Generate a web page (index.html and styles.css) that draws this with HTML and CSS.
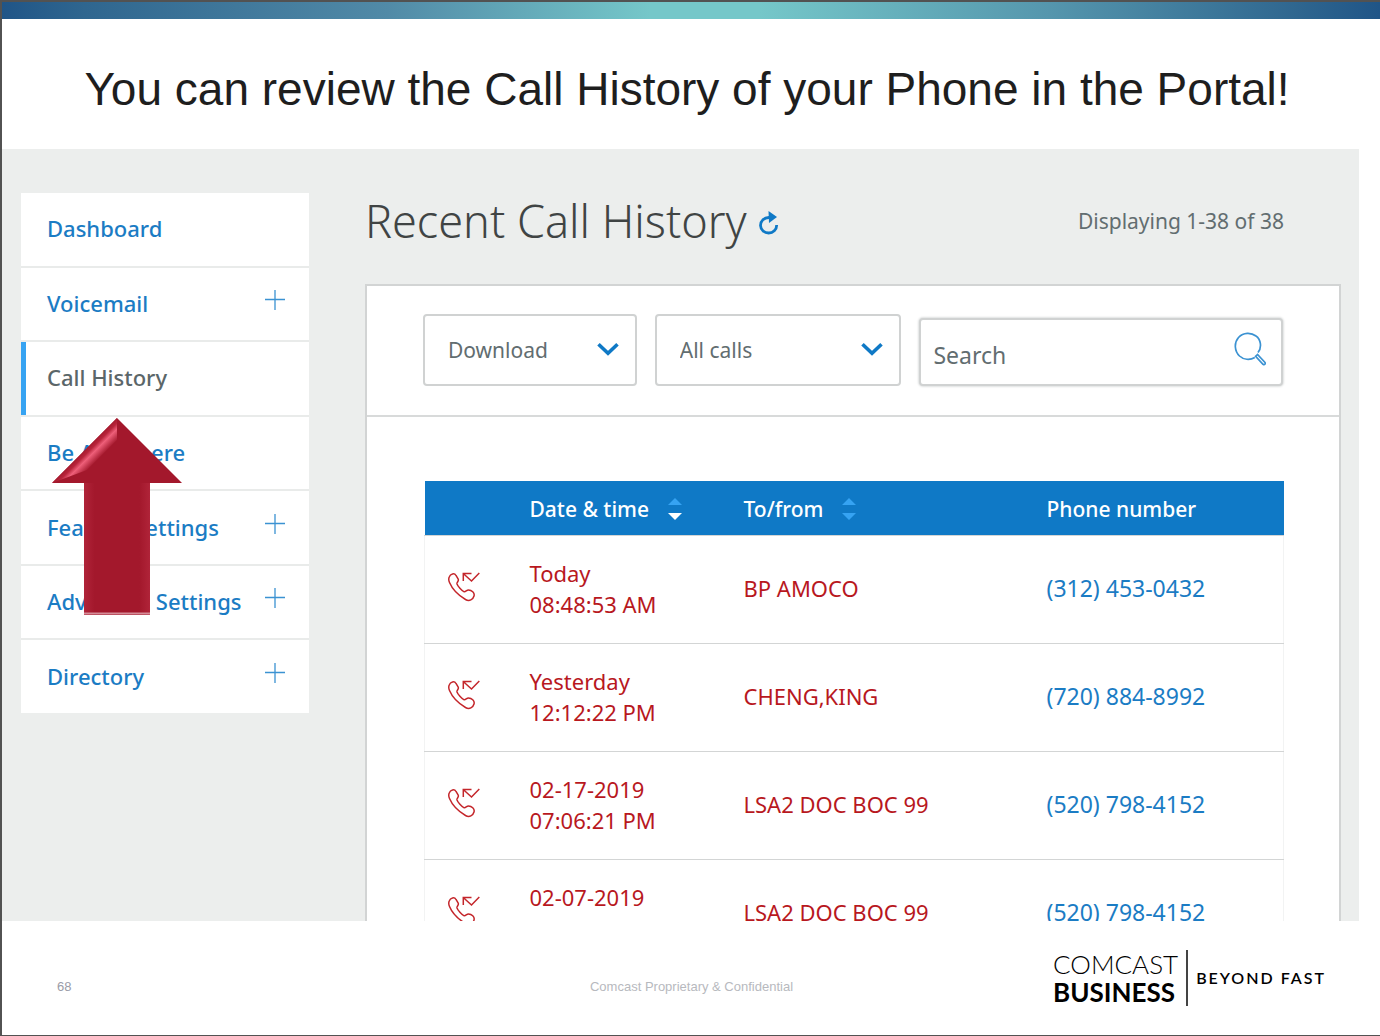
FILE: index.html
```html
<!DOCTYPE html>
<html lang="en">
<head>
<meta charset="utf-8">
<meta name="viewport" content="width=device-width, initial-scale=1">
<title>Call History</title>
<link rel="stylesheet" href="styles.css">
</head>
<body>
<svg class="defs" aria-hidden="true">
  <symbol id="plus" viewBox="0 0 20 20"><path d="M10 0v20M0 9.500h20" fill="none" stroke="#3b92d2" stroke-width="1.300"/></symbol>
  <symbol id="chevron" viewBox="0 0 22 14"><path d="M1.500 2.200L11 11.200L20.500 2.200" fill="none" stroke="#0f79c6" stroke-width="3.600"/></symbol>
  <symbol id="call" viewBox="0 0 32 30"><path d="M1.200 5C2.500 1.500 6.500 .8 8 3.500L10.200 7.200C11.200 9.200 8.500 10 9 12C10 14.500 13.500 18.500 15.800 19.600C17.500 20.400 18.500 18 20.500 18C23.500 18 27 20.800 26 24C25 27.500 21.500 29.800 17.500 27.500C10 23 4 16.500 1.500 10.500C.6 8.500 .6 6.500 1.200 5ZM15.300 9V1.500H23.500M15.500 1.800L23.500 9L31.300 1" fill="none" stroke="#c4262b" stroke-width="1.500"/></symbol>
</svg>
<div class="slide">
  <div class="ribbon"></div>
  <header class="title"><h1>You can review the Call History of your Phone in the Portal!</h1></header>
  <div class="portal">
    <nav class="menu" aria-label="Portal">
      <a class="item" href="#">Dashboard</a>
      <a class="item" href="#">Voicemail<svg class="plus"><use href="#plus"/></svg></a>
      <a class="item current" href="#" aria-current="page">Call History</a>
      <a class="item" href="#">Be Anywhere</a>
      <a class="item" href="#">Feature Settings<svg class="plus"><use href="#plus"/></svg></a>
      <a class="item" href="#">Advanced Settings<svg class="plus"><use href="#plus"/></svg></a>
      <a class="item" href="#">Directory<svg class="plus"><use href="#plus"/></svg></a>
      <svg class="arrow" viewBox="0 0 130 197" aria-hidden="true">
        <defs>
          <linearGradient id="bevel" gradientUnits="userSpaceOnUse" x1="32" y1="32" x2="44" y2="44">
            <stop offset="0" stop-color="#a3182c"/><stop offset=".25" stop-color="#b8253b"/><stop offset=".5" stop-color="#ee5f79"/><stop offset="1" stop-color="#a3182c"/>
          </linearGradient>
          <linearGradient id="shaft"><stop offset="0" stop-color="#b02439"/><stop offset=".16" stop-color="#a3182c"/><stop offset=".84" stop-color="#a3182c"/><stop offset="1" stop-color="#b02439"/></linearGradient>
        </defs>
        <path d="M65 0L130 65H98V197H32V65H0Z" fill="#a3182c"/>
        <path d="M32 65H98V197H32Z" fill="url(#shaft)"/>
        <path d="M65 0V22L35 52L0 65Z" fill="url(#bevel)"/>
        <path d="M32 195.500H98" stroke="#d58c97" stroke-width="2"/>
      </svg>
    </nav>
    <main class="content">
      <div class="heading">
        <h2>Recent Call History</h2>
        <button class="refresh" aria-label="Refresh"><svg viewBox="0 0 20 24"><path d="M10.500 6.500C5 6.200 1.500 10 1.500 14.500C1.700 19 5.500 22 9.700 22C14 22 17.700 18.700 17.700 14" fill="none" stroke="#0f79c6" stroke-width="2.800"/><path d="M9.500 0L18 6L10 12Z" fill="#0f79c6"/></svg></button>
        <p class="count">Displaying 1-38 of 38</p>
      </div>
      <section class="card">
        <form class="tools">
          <div class="pick download"><select aria-label="Download"><option>Download</option></select><svg class="chevron"><use href="#chevron"/></svg></div>
          <div class="pick calls"><select aria-label="Filter calls"><option>All calls</option></select><svg class="chevron"><use href="#chevron"/></svg></div>
          <div class="search"><input type="text" placeholder="Search" aria-label="Search"><svg class="lens" viewBox="0 0 32 34"><path d="M23.500 22.500L21.600 24.300L29 32.300C30.500 33.300 32 31.800 30.800 30.200Z M24 20.500C28 15.500 27 7.500 22 4C17 .2 9.500 .2 4.500 5.500C-.2 11 .5 19 5.500 24C9.500 27.800 16 28.300 20.800 25.500" fill="none" stroke="#3b92d2" stroke-width="1.700"/></svg></div>
        </form>
        <table class="log">
          <colgroup><col class="c-icon"><col class="c-date"><col class="c-name"><col></colgroup>
          <thead><tr>
            <th></th>
            <th scope="col"><button class="sort">Date &amp; time<svg viewBox="0 0 14 22"><path d="M0 7L7 0L14 7Z" fill="#36a3f2"/><path d="M0 15L7 22L14 15Z" fill="#fff"/></svg></button></th>
            <th scope="col"><button class="sort">To/from<svg viewBox="0 0 14 22"><path d="M0 7L7 0L14 7ZM0 15L7 22L14 15Z" fill="#36a3f2"/></svg></button></th>
            <th scope="col">Phone number</th>
          </tr></thead>
          <tbody>
            <tr><td><svg class="call"><use href="#call"/></svg></td><td>Today<br>08:48:53 AM</td><td>BP AMOCO</td><td class="phone"><a href="#">(312) 453-0432</a></td></tr>
            <tr><td><svg class="call"><use href="#call"/></svg></td><td>Yesterday<br>12:12:22 PM</td><td>CHENG,KING</td><td class="phone"><a href="#">(720) 884-8992</a></td></tr>
            <tr><td><svg class="call"><use href="#call"/></svg></td><td>02-17-2019<br>07:06:21 PM</td><td>LSA2 DOC BOC 99</td><td class="phone"><a href="#">(520) 798-4152</a></td></tr>
            <tr><td><svg class="call"><use href="#call"/></svg></td><td>02-07-2019<br>&nbsp;</td><td>LSA2 DOC BOC 99</td><td class="phone"><a href="#">(520) 798-4152</a></td></tr>
          </tbody>
        </table>
      </section>
    </main>
  </div>
  <footer class="foot">
    <span class="page">68</span>
    <span class="notice">Comcast Proprietary &amp; Confidential</span>
    <div class="brand"><p class="name"><span>COMCAST</span><b>BUSINESS</b></p><p class="tag">BEYOND FAST</p></div>
  </footer>
</div>
</body>
</html>
```
FILE: styles.css
```css
* { box-sizing: border-box; }
body, h1, h2, p { margin: 0; }
body { background: #fff; font-family: "Noto Sans", "Open Sans", sans-serif; font-size: 21px; }
svg { display: block; }
.defs { position: absolute; width: 0; height: 0; }
a { color: #1b7cc4; text-decoration: none; }
button { border: 0; padding: 0; background: none; font: inherit; color: inherit; }

.slide { display: flex; flex-direction: column; min-height: 100vh; border: solid #525252; border-width: 2px 0 1px 2px; }
.ribbon { height: 17px; background: linear-gradient(90deg, #205587, #2f668f 6%, #518aa7 28%, #75c7c9 47%, #75c7c9 55%, #5596ad 76%, #2f668f 94%, #205587); }
.title { display: flex; align-items: center; justify-content: center; height: 130px; padding: 10px 8px 0 0; color: #1e1e1e; }
h1 { font: 400 46px/52px "Liberation Sans", Arial, sans-serif; white-space: nowrap; }

.portal { display: flex; align-items: flex-start; gap: 56px; height: 772px; margin-right: 21px; padding: 44px 18px 0 19px; background: #eceeed; overflow: hidden; }
.menu { position: relative; display: flex; flex-direction: column; flex: 0 0 288px; min-height: 520px; background: #fff; }
.item { display: flex; flex: 1; align-items: center; justify-content: space-between; padding: 0 24px 2px 26px; border-bottom: 2px solid #e9ebea; font-size: 22px; font-weight: 500; white-space: nowrap; }
.item:nth-of-type(7) { border-bottom: 0; }
.current { color: #5b6669; box-shadow: inset 5px 0 #36a3f2; }
.plus { width: 20px; height: 20px; margin-bottom: 6px; }
.arrow { position: absolute; left: 31px; top: 225px; width: 130px; height: 197px; }

.content { flex: 1; min-width: 0; }
.heading { display: flex; align-items: center; height: 91px; padding: 0 57px 36px 0; color: #404444; }
h2 { font-size: 45px; line-height: 56px; font-weight: 300; white-space: nowrap; }
.refresh svg { width: 20px; height: 24px; margin: 4px 0 0 12px; }
.count { margin-left: auto; color: #626d70; }
.card { border: solid #d2d4d4; border-width: 2px 2px 0; background: #fff; }
.tools { display: flex; gap: 18px; height: 131px; padding: 28px 56px 0; border-bottom: 2px solid #d8dada; }
.pick, .search { position: relative; }
.pick { height: 72px; }
.download { flex: 214 1 0; }
.calls { flex: 247 1 0; }
.search { flex: 364 1 0; height: 68px; margin-top: 4px; }
select, input { width: 100%; height: 100%; border: 2px solid #d0d2d2; border-radius: 4px; background: #fff; color: #626d70; font: inherit; appearance: none; }
select { padding: 0 23px; }
input { padding: 6px 12px 0; box-shadow: 0 0 2px 1px #dfe1e1; font-size: 23px; }
input::placeholder { color: #626d70; opacity: 1; }
.chevron { position: absolute; right: 18px; top: 28px; width: 22px; height: 14px; pointer-events: none; }
.lens { position: absolute; right: 17px; top: 14px; width: 32px; height: 34px; }

.log { width: calc(100% - 112px); margin: 64px 55px 0 57px; border-collapse: collapse; table-layout: fixed; color: #b8181e; }
.c-icon { width: 105px; }
.c-date { width: 214px; }
.c-name { width: 303px; }
th { height: 54px; padding: 2px 0 0; background: #0f79c6; color: #fff; font-weight: 500; text-align: left; }
td { height: 108px; padding: 0 0 1px; border: solid #d3d5d5; border-width: 1px 0; font-size: 22px; line-height: 31px; }
tbody { border: solid #f2f3f3; border-width: 0 1px; }
.phone { font-size: 23px; }
.sort { display: flex; align-items: center; gap: 19px; }
.sort svg { width: 14px; height: 22px; }
.call { width: 32px; height: 30px; margin: 0 0 4px 23px; }

.foot { display: grid; grid-template-columns: 1fr auto 1fr; flex: 1; align-items: center; padding: 18px 54px 0 55px; color: #b7b9be; font: 13px/16px "Liberation Sans", Arial, sans-serif; }
.page { color: #9a9ca8; }
.brand { display: flex; align-items: center; justify-self: end; margin-bottom: 18px; color: #000; font-family: Lato, sans-serif; }
.name { display: flex; flex-direction: column; padding-right: 8px; border-right: 2px solid #444; font-size: 26px; line-height: 28px; }
.name span { font-weight: 300; }
.tag { padding-left: 8px; font-size: 16px; font-weight: 600; letter-spacing: 2px; }
```
